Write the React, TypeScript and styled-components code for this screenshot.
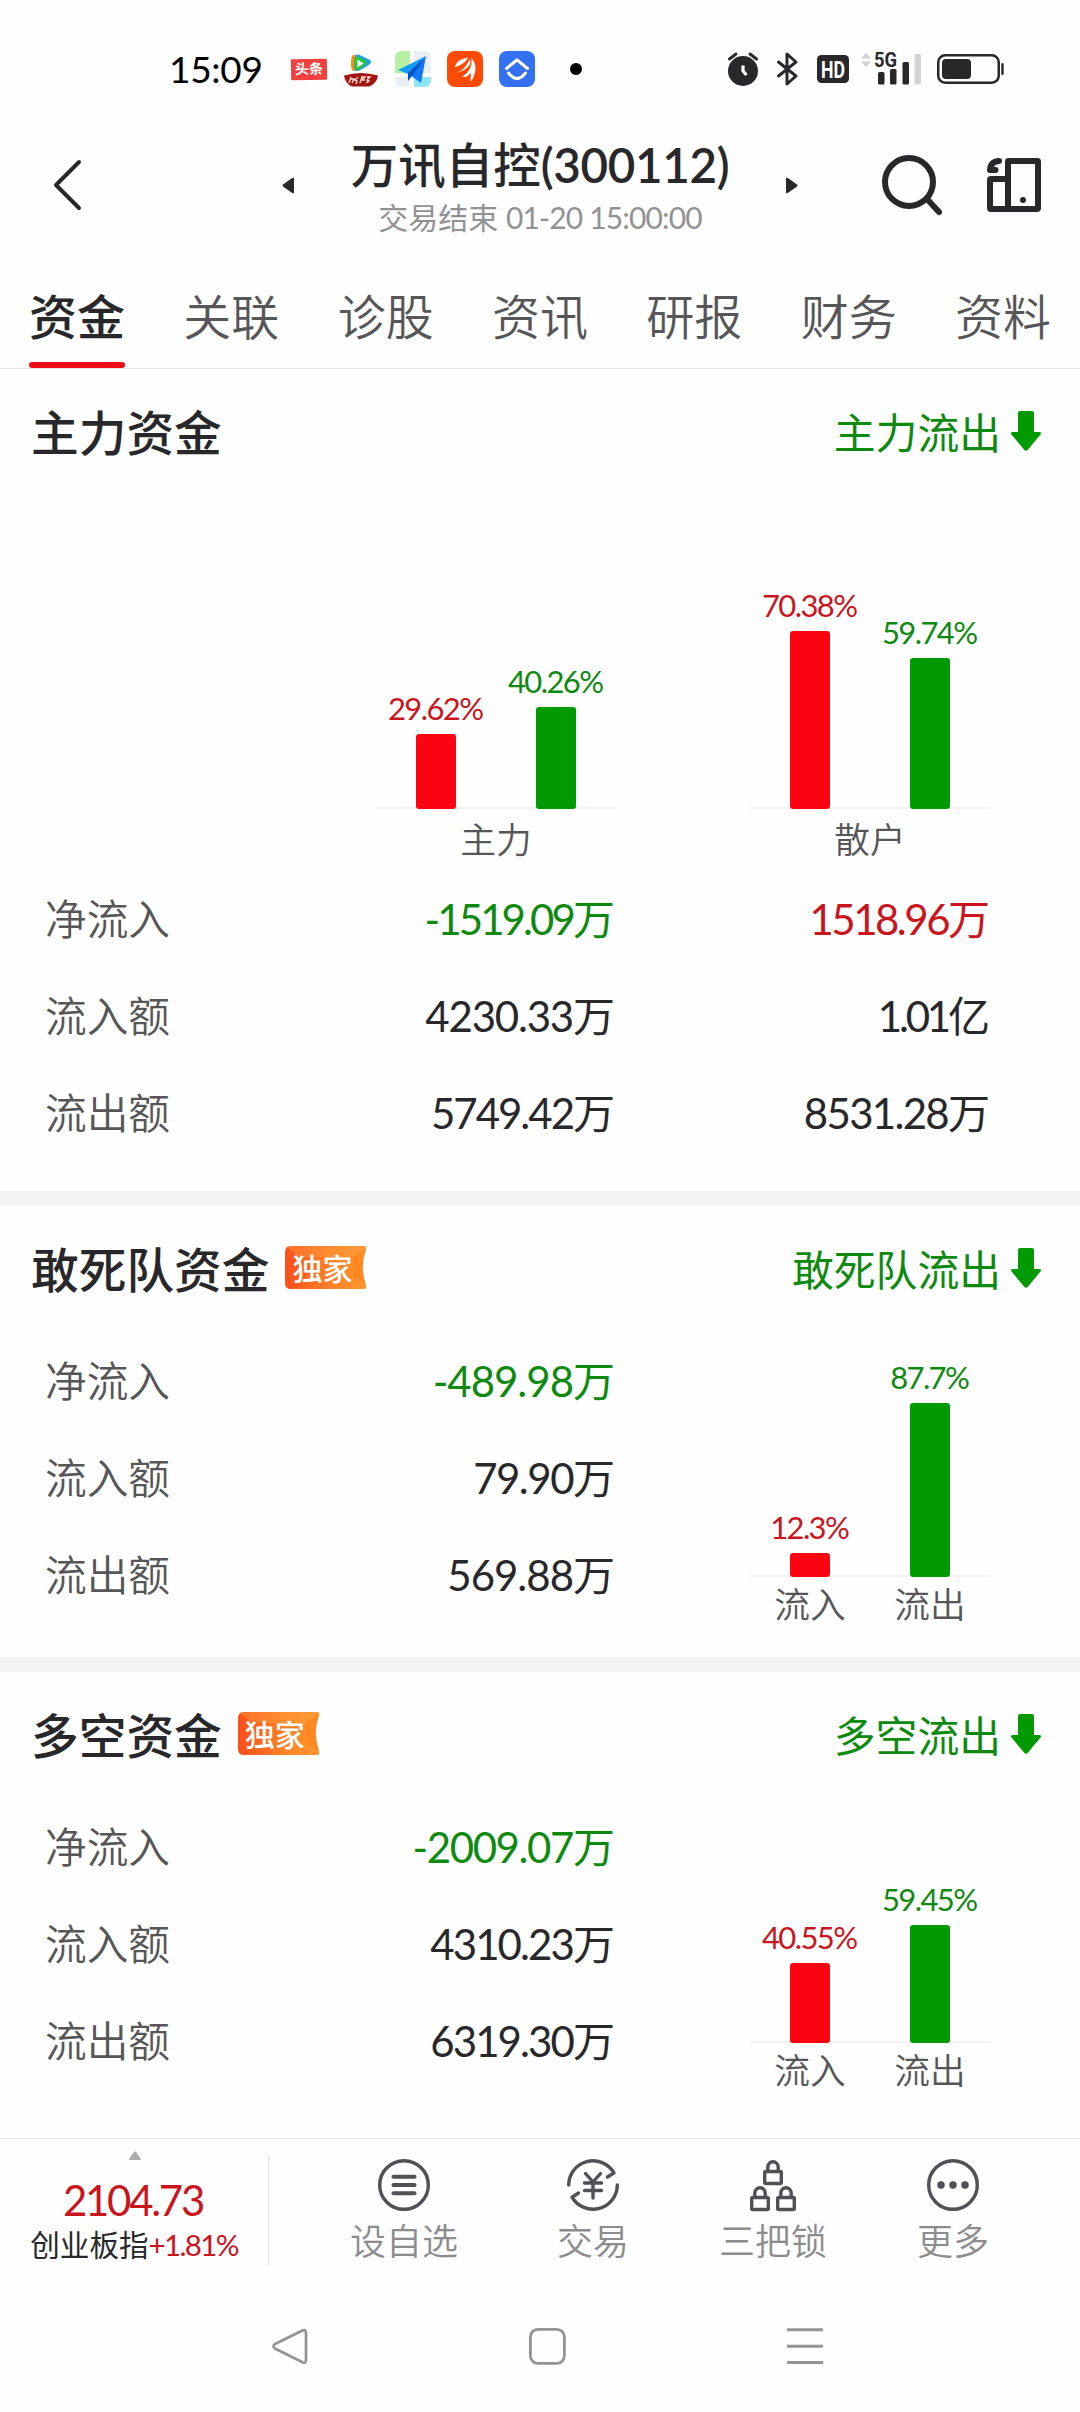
import React from "react";
import styled, { createGlobalStyle } from "styled-components";

const RED = "#c9151e";
const GREEN = "#0f8a10";
const INK = "#28282a";

const GlobalStyle = createGlobalStyle`
  * { box-sizing: border-box; }
  body {
    margin: 0;
    background: #fefefe;
    color: ${INK};
    font-family: "Lato", "Noto Sans CJK SC", sans-serif;
  }
  svg { display: block; flex: none; overflow: visible; }
`;

const Screen = styled.div`
  width: 1080px;
  height: 2412px;
  display: flex;
  flex-direction: column;
  overflow: hidden;
  background: #fefefe;
`;

const StatusBar = styled.div`
  height: 138px;
  padding: 0 76px 0 169px;
  display: flex;
  align-items: center;
  justify-content: space-between;
`;

const StatusGroup = styled.div`
  display: flex;
  align-items: center;
`;

const Clock = styled.span`
  width: 122px;
  font-size: 37px;
  line-height: 40px;
  letter-spacing: -0.3px;
  color: #000;
`;

const AppIcons = styled.div`
  display: flex;
  align-items: center;
  gap: 16px;
`;

const NewsIcon = styled.div`
  width: 36px;
  height: 21px;
  border-radius: 1px;
  background: #f04040;
  color: #fff;
  font-size: 14px;
  font-weight: 700;
  line-height: 20px;
  text-align: center;
  transform: rotate(-1deg);
`;

const Dot = styled.div`
  width: 12px;
  height: 12px;
  margin-left: 35px;
  border-radius: 50%;
  background: #000;
`;

const Header = styled.header`
  height: 132px;
  display: grid;
  grid-template-columns: 282px 516px 1fr;
`;

const Back = styled.div`
  padding: 22px 0 0 53px;
`;

const StockSwitch = styled.div`
  display: flex;
  justify-content: space-between;
`;

const Caret = styled.svg`
  margin-top: 39px;
`;

const StockName = styled.div`
  text-align: center;
`;

const StockTitle = styled.div`
  height: 55px;
  font-size: 47.5px;
  line-height: 53px;
  font-weight: 500;
  white-space: nowrap;
`;

const StockCode = styled.span`
  font-weight: 600;
  letter-spacing: -0.3px;
`;

const StockTime = styled.div`
  margin-top: 7px;
  font-size: 30px;
  line-height: 35px;
  color: #929294;
  white-space: nowrap;
`;

const Timestamp = styled.span`
  letter-spacing: -0.85px;
`;

const HeaderTools = styled.div`
  display: flex;
  gap: 45px;
  padding: 17px 0 0 84px;
`;

const Tabs = styled.nav`
  height: 99px;
  padding: 0 29px;
  display: flex;
  justify-content: space-between;
  border-bottom: 1px solid #e3e3e3;
`;

const Tab = styled.div<{ $active?: boolean }>`
  width: 96px;
  height: 98px;
  padding-top: 16px;
  display: flex;
  flex-direction: column;
  align-items: center;
  justify-content: space-between;
  font-family: "Noto Sans CJK SC", sans-serif;
  font-size: 48px;
  line-height: 56px;
  font-weight: ${(p) => (p.$active ? 500 : 350)};
  color: ${(p) => (p.$active ? INK : "#565658")};

  &::after {
    content: "";
    width: 96px;
    height: 6px;
    border-radius: 3px;
    background: ${(p) => (p.$active ? "#f00c18" : "transparent")};
  }
`;

const Section = styled.section<{ $height: number }>`
  height: ${(p) => p.$height}px;
  flex: none;
`;

const Divider = styled.div`
  height: 15px;
  flex: none;
  background: #f4f4f4;
`;

const SectionHead = styled.div`
  height: 126px;
  padding: 0 39px 0 31px;
  display: flex;
  align-items: center;
`;

const SectionTitle = styled.h2`
  margin: -2px 0 0;
  font-family: "Noto Sans CJK SC", sans-serif;
  font-size: 47.7px;
  line-height: 60px;
  font-weight: 500;
`;

const Badge = styled.div`
  position: relative;
  width: 82px;
  height: 43px;
  margin: -3px 0 0 16px;
`;

const BadgeShape = styled.svg`
  position: absolute;
  inset: 0;
`;

const BadgeText = styled.span`
  position: absolute;
  left: 7px;
  top: 1px;
  font-size: 30px;
  line-height: 42px;
  font-weight: 500;
  color: #fff;
  white-space: nowrap;
`;

const Trend = styled.div`
  margin: -2px 0 0 auto;
  display: flex;
  align-items: center;
  gap: 10px;
  font-family: "Noto Sans CJK SC", sans-serif;
  font-size: 41.8px;
  line-height: 60px;
  color: ${GREEN};
`;

const TrendArrow = styled.svg`
  margin-top: -1px;
`;

const ChartPair = styled.div`
  height: 375px;
  padding: 0 90px 0 376px;
  display: flex;
  justify-content: space-between;
  align-items: flex-end;
`;

const Chart = styled.div`
  width: 240px;
`;

const Plot = styled.div`
  display: flex;
  align-items: flex-end;
  background: linear-gradient(#f2f2f2, #f2f2f2) bottom / 100% 2px no-repeat;
`;

const BarColumn = styled.div<{ $color: string }>`
  width: 120px;
  display: flex;
  flex-direction: column;
  align-items: center;
  color: ${(p) => p.$color};
`;

const BarValue = styled.span`
  font-size: 31px;
  line-height: 36px;
  letter-spacing: -1.6px;
  padding-right: 1.6px;
  margin-bottom: 8px;
  white-space: nowrap;
`;

const Bar = styled.div<{ $fill: string }>`
  width: 40px;
  border-radius: 3px;
  background: ${(p) => p.$fill};
`;

const Captions = styled.div<{ $compact?: boolean }>`
  display: flex;
  height: ${(p) => (p.$compact ? 46 : 61)}px;
  padding-top: 5px;
  font-family: "Noto Sans CJK SC", sans-serif;
  font-size: 35.7px;
  line-height: ${(p) => (p.$compact ? 41 : 48)}px;
  font-weight: 350;
  color: #565658;
`;

const Caption = styled.div`
  flex: 1;
  text-align: center;
`;

const SectionBody = styled.div`
  display: flex;
  justify-content: space-between;
  padding-right: 90px;
`;

const Rows = styled.div`
  width: 615px;
`;

const Row = styled.div<{ $wide?: boolean }>`
  width: ${(p) => (p.$wide ? 990 : 615)}px;
  height: 97px;
  padding-left: 45px;
  display: grid;
  grid-template-columns: 200px 370px 375px;
  align-items: center;
`;

const RowLabel = styled.span`
  margin-top: -3px;
  font-family: "Noto Sans CJK SC", sans-serif;
  font-size: 41.7px;
  line-height: 60px;
  font-weight: 350;
  color: #565658;
`;

const Amount = styled.span<{ $color?: string; $track: number }>`
  text-align: right;
  font-size: 42px;
  line-height: 60px;
  color: ${(p) => p.$color ?? INK};
  letter-spacing: ${(p) => p.$track}px;
  padding-right: ${(p) => -p.$track}px;
  white-space: nowrap;
`;

const SideChart = styled.div`
  height: 291px;
  display: flex;
  flex-direction: column;
  justify-content: flex-end;
`;

const BottomBar = styled.footer`
  height: 130px;
  flex: none;
  display: flex;
  border-top: 1px solid #e3e3e3;
`;

const IndexBox = styled.div`
  width: 269px;
  height: 111px;
  margin-top: 15px;
  border-right: 1px solid #e3e3e3;
  display: flex;
  flex-direction: column;
  align-items: center;
`;

const IndexCaret = styled.svg`
  margin: -3px 0 0 2px;
`;

const IndexValue = styled.div`
  margin-top: 15px;
  font-size: 42px;
  line-height: 50px;
  letter-spacing: -2.3px;
  padding-right: 2px;
  color: ${RED};
`;

const IndexName = styled.div`
  font-size: 29.6px;
  line-height: 36px;
  margin-top: 2px;
  white-space: nowrap;
`;

const Rise = styled.span`
  color: ${RED};
  letter-spacing: -1.7px;
`;

const Actions = styled.div`
  display: grid;
  grid-template-columns: 198px 180px 180px 180px;
  margin-left: 36px;
`;

const Action = styled.div`
  display: flex;
  flex-direction: column;
  align-items: center;
  padding-top: 20px;
`;

const ActionLabel = styled.span`
  margin-top: 4px;
  font-family: "Noto Sans CJK SC", sans-serif;
  font-size: 36px;
  line-height: 48px;
  font-weight: 350;
  color: #8c8c8f;
`;

const SystemNav = styled.div`
  flex: 1;
  display: flex;
  gap: 221px;
  padding: 60px 0 0 271px;
`;

const ICON_STROKE = "#505056";

function VideoAppIcon() {
  return (
    <svg width="36" height="36" viewBox="0 0 36 36">
      <path d="M10 4q-2 1-2 8t2 8l3-1V4z" fill="#ff8a1c" />
      <path d="M13 3.500q3-.8 14 5.500 2 2 0 4Q16 21 12 20 10 12 13 3.500z" fill="#1e9df0" />
      <path d="M12 5.500q3-.5 11 4 1.500 1.500 0 3.500-7 7-11 6-2-6 0-13.500z" fill="#24c838" />
      <path d="M14.500 8.500v8l6-4z" fill="#fff" />
      <path d="M1 24.500q17-5 34 0-1 8-9 11H9q-7-3-8-11z" fill="#a21410" />
      <path d="M8 26l-2 6m2-4h3l-2 4m6-6l-3 3 2 1-1 3m5-7h4l-3 3h3m-3-3l-2 6m7-6h3l-3 3 2 1-3 2" fill="none" stroke="#f6d9c8" strokeWidth="1.400" />
    </svg>
  );
}

function MapAppIcon() {
  return (
    <svg width="36" height="36" viewBox="0 0 36 36">
      <path d="M7 0h8v22H0V7q0-7 7-7z" fill="#b9efa0" />
      <path d="M19 0h10q7 0 7 7v15H19zM0 26h15v10H7q-7 0-7-7z" fill="#e9eff5" />
      <path d="M19 26h17v3q0 7-7 7H19z" fill="#8fe6fb" />
      <path d="M31 5L3 19l10 4z" fill="#169bff" />
      <path d="M31 5L15 24l11 8z" fill="#1177f5" />
      <path d="M31 5L13 22v8l4-5z" fill="#0753c4" />
    </svg>
  );
}

function BrokerAppIcon() {
  return (
    <svg width="36" height="36" viewBox="0 0 36 36">
      <rect width="36" height="36" rx="8" fill="#fe4a05" />
      <path d="M7.500 16.500Q10 8 21 6.500q-2 6-13.500 10zM10 22Q20 17 22.500 8q4 8-12.500 14zM15 26q11-7 9.500-19 8 9 0 23-1 .5-1-1l.5-7-5 4z" fill="#fff" />
    </svg>
  );
}

function HomeAppIcon() {
  return (
    <svg width="36" height="36" viewBox="0 0 36 36">
      <rect width="36" height="36" rx="8" fill="#3370f2" />
      <path d="M7.500 17.500L18 8.800l10.500 8.700M9.500 22q8.500 11 17 0" fill="none" stroke="#fff" strokeWidth="3" strokeLinecap="round" strokeLinejoin="round" />
    </svg>
  );
}

const SystemSet = styled(StatusGroup)`
  & > :nth-child(2) { margin-left: 19px; }
  & > :nth-child(3) { margin-left: 19px; }
  & > :nth-child(4) { margin-left: 12px; }
  & > :nth-child(5) { margin-left: 16px; }
`;

const GlyphText = styled.text`
  font-family: "Roboto", sans-serif;
  font-weight: 700;
`;

function SystemIcons() {
  return (
    <SystemSet>
      <svg width="30" height="34" viewBox="0 0 30 34">
        <circle cx="15" cy="19" r="15" fill={INK} />
        <path d="M1.500 7l6.500-5M22 2l6.500 5" stroke={INK} strokeWidth="3" strokeLinecap="round" />
        <path d="M15 13.500V19l3.500 4" stroke="#fff" strokeWidth="3.200" fill="none" />
      </svg>
      <svg width="21" height="34" viewBox="0 0 21 34">
        <path d="M1.500 10l17.500 14-9 8V2l9 8L1.500 24" fill="none" stroke={INK} strokeWidth="3" strokeLinecap="round" strokeLinejoin="round" />
      </svg>
      <svg width="32" height="28" viewBox="0 0 32 28">
        <rect width="32" height="28" rx="4.500" fill={INK} />
        <GlyphText x="4" y="22.500" fontSize="23" fill="#fff" textLength="24" lengthAdjust="spacingAndGlyphs">HD</GlyphText>
      </svg>
      <svg width="60" height="34" viewBox="0 0 60 34">
        <path d="M0 6.500L5 1l5 5.500zM0 9.500L5 15l5-5.500z" fill="#d3d3d3" />
        <rect x="17" y="20" width="6.500" height="12.500" rx="1.500" fill={INK} />
        <rect x="29" y="17" width="6.500" height="15.500" rx="1.500" fill={INK} />
        <rect x="41.500" y="10" width="6.500" height="22.500" rx="1.500" fill={INK} />
        <rect x="53.500" y="2" width="6.500" height="30.500" rx="1.500" fill="#d3d3d3" />
        <GlyphText x="13" y="15" fontSize="20.500" fill={INK} textLength="23" lengthAdjust="spacingAndGlyphs">5G</GlyphText>
      </svg>
      <svg width="67" height="30" viewBox="0 0 67 30">
        <rect x="1.250" y="1.250" width="60.500" height="27.500" rx="7" fill="none" stroke={INK} strokeWidth="2.500" />
        <rect x="5" y="5" width="29" height="20" rx="4" fill={INK} />
        <rect x="64.300" y="9" width="2.400" height="12" rx="1.200" fill={INK} />
      </svg>
    </SystemSet>
  );
}

function ExclusiveBadge() {
  return (
    <Badge>
      <BadgeShape width="82" height="43" viewBox="0 0 82 43">
        <defs>
          <linearGradient id="badgeFill" x1="0" x2="1" y1="0" y2="0">
            <stop offset="0" stopColor="#fb4f1c" />
            <stop offset="0.6" stopColor="#fd8428" />
            <stop offset="1" stopColor="#fe962e" />
          </linearGradient>
        </defs>
        <path d="M6 0h73q3 0 2 3-6.500 18 0 36 1 4-2 4H6q-6 0-6-6V6q0-6 6-6z" fill="url(#badgeFill)" />
        <path d="M2 1L14 11h54L81 1q-1-1-3-1H6Q3 0 2 1z" fill="#ffa040" opacity=".4" />
        <path d="M81 3q-6.500 18 0 36L68 30V11z" fill="#ff7d18" opacity=".5" />
      </BadgeShape>
      <BadgeText>独家</BadgeText>
    </Badge>
  );
}

function DownTrend({ text }: { text: string }) {
  return (
    <Trend>
      {text}
      <TrendArrow width="30" height="40" viewBox="0 0 30 40">
        <path d="M9 0h12q2 0 2 2v19h5q3 0 1.500 2.500L17 38.500q-2 2.500-4 0L.5 23.500Q-1 21 2 21h5V2q0-2 2-2z" fill="#029a02" />
      </TrendArrow>
    </Trend>
  );
}

type BarDatum = { pct: string; up: boolean };

function Bars({ data, scale }: { data: BarDatum[]; scale: number }) {
  return (
    <Plot>
      {data.map((d) => (
        <BarColumn key={d.pct} $color={d.up ? RED : GREEN}>
          <BarValue>{d.pct}%</BarValue>
          <Bar $fill={d.up ? "#fa0411" : "#029a02"} style={{ height: Math.round(parseFloat(d.pct) * scale) }} />
        </BarColumn>
      ))}
    </Plot>
  );
}

type AmountDatum = { text: string; color?: string; track?: number };

function AmountRow({ label, values }: { label: string; values: AmountDatum[] }) {
  return (
    <Row $wide={values.length > 1}>
      <RowLabel>{label}</RowLabel>
      {values.map((v) => (
        <Amount key={v.text} $color={v.color} $track={v.track ?? -1.2}>
          {v.text}
        </Amount>
      ))}
    </Row>
  );
}

type FlowProps = { title: string; trend: string; height: number; rows: [string, AmountDatum][]; bars: BarDatum[] };

function FlowSection({ title, trend, height, rows, bars }: FlowProps) {
  return (
    <Section $height={height}>
      <SectionHead>
        <SectionTitle>{title}</SectionTitle>
        <ExclusiveBadge />
        <DownTrend text={trend} />
      </SectionHead>
      <SectionBody>
        <Rows>
          {rows.map(([label, value]) => (
            <AmountRow key={label} label={label} values={[value]} />
          ))}
        </Rows>
        <SideChart>
          <Chart>
            <Bars data={bars} scale={1.985} />
            <Captions $compact>
              <Caption>流入</Caption>
              <Caption>流出</Caption>
            </Captions>
          </Chart>
        </SideChart>
      </SectionBody>
    </Section>
  );
}

const lineProps = {
  fill: "none",
  stroke: ICON_STROKE,
  strokeWidth: 3.4,
  strokeLinecap: "round" as const,
  strokeLinejoin: "round" as const,
};

function Lock({ x, y }: { x: number; y: number }) {
  return (
    <g transform={`translate(${x} ${y})`}>
      <rect x="1.700" y="11.500" width="16.600" height="12" rx="1" />
      <path d="M4.800 11V7.500a5.200 5.800 0 0 1 10.400 0V11" />
    </g>
  );
}

export default function App() {
  return (
    <Screen>
      <GlobalStyle />
      <StatusBar>
        <StatusGroup>
          <Clock>15:09</Clock>
          <AppIcons>
            <NewsIcon>头条</NewsIcon>
            <VideoAppIcon />
            <MapAppIcon />
            <BrokerAppIcon />
            <HomeAppIcon />
          </AppIcons>
          <Dot />
        </StatusGroup>
        <SystemIcons />
      </StatusBar>

      <Header>
        <Back>
          <svg width="28" height="50" viewBox="0 0 28 50">
            <path d="M26 2L3 25l23 23" fill="none" stroke={INK} strokeWidth="4" strokeLinecap="round" strokeLinejoin="round" />
          </svg>
        </Back>
        <StockSwitch>
          <Caret width="12" height="17" viewBox="0 0 12 17">
            <path d="M10.500.8L1 7.500q-1 1 0 2l9.500 6.700q1.500.5 1.500-1V1.800q0-1.500-1.500-1z" fill={INK} />
          </Caret>
          <StockName>
            <StockTitle>万讯自控<StockCode>(300112)</StockCode></StockTitle>
            <StockTime>交易结束 <Timestamp>01-20 15:00:00</Timestamp></StockTime>
          </StockName>
          <Caret width="12" height="17" viewBox="0 0 12 17">
            <path d="M1.500.8L11 7.500q1 1 0 2l-9.500 6.700Q0 16.700 0 15.200V1.800q0-1.500 1.500-1z" fill={INK} />
          </Caret>
        </StockSwitch>
        <HeaderTools>
          <svg width="60" height="60" viewBox="0 0 60 60">
            <circle cx="27" cy="27" r="24" fill="none" stroke={INK} strokeWidth="6" />
            <path d="M45.500 44.500L57 57" stroke={INK} strokeWidth="6" strokeLinecap="round" />
          </svg>
          <svg width="54" height="60" viewBox="0 0 54 60">
            <path d="M21 6.500q0-.5.500-.5h29q.5 0 .5.500V53q0 1-1 1H4q-1 0-1-1V25q0-1 1-1h17zM21 6v48" fill="none" stroke={INK} strokeWidth="6" strokeLinejoin="round" />
            <circle cx="36" cy="45" r="3" fill={INK} />
            <path d="M12 6Q3.500 6.500 3 15h5.500" fill="none" stroke={INK} strokeWidth="6" strokeLinecap="round" strokeLinejoin="round" />
          </svg>
        </HeaderTools>
      </Header>

      <Tabs>
        {["资金", "关联", "诊股", "资讯", "研报", "财务", "资料"].map((t, i) => (
          <Tab key={t} $active={i === 0}>{t}</Tab>
        ))}
      </Tabs>

      <Section $height={822}>
        <SectionHead>
          <SectionTitle>主力资金</SectionTitle>
          <DownTrend text="主力流出" />
        </SectionHead>
        <ChartPair>
          <Chart>
            <Bars data={[{ pct: "29.62", up: true }, { pct: "40.26", up: false }]} scale={2.53} />
            <Captions><Caption>主力</Caption></Captions>
          </Chart>
          <Chart>
            <Bars data={[{ pct: "70.38", up: true }, { pct: "59.74", up: false }]} scale={2.53} />
            <Captions><Caption>散户</Caption></Captions>
          </Chart>
        </ChartPair>
        <AmountRow
          label="净流入"
          values={[{ text: "-1519.09万", color: GREEN, track: -2.9 }, { text: "1518.96万", color: RED, track: -2.5 }]}
        />
        <AmountRow label="流入额" values={[{ text: "4230.33万" }, { text: "1.01亿", track: -3.2 }]} />
        <AmountRow label="流出额" values={[{ text: "5749.42万", track: -2 }, { text: "8531.28万", track: -1.7 }]} />
      </Section>
      <Divider />

      <FlowSection
        title="敢死队资金"
        trend="敢死队流出"
        height={451}
        rows={[
          ["净流入", { text: "-489.98万", color: GREEN, track: -1 }],
          ["流入额", { text: "79.90万", track: -1.5 }],
          ["流出额", { text: "569.88万", track: -1 }],
        ]}
        bars={[{ pct: "12.3", up: true }, { pct: "87.7", up: false }]}
      />
      <Divider />

      <FlowSection
        title="多空资金"
        trend="多空流出"
        height={466}
        rows={[
          ["净流入", { text: "-2009.07万", color: GREEN, track: -1.4 }],
          ["流入额", { text: "4310.23万", track: -1.9 }],
          ["流出额", { text: "6319.30万", track: -1.9 }],
        ]}
        bars={[{ pct: "40.55", up: true }, { pct: "59.45", up: false }]}
      />

      <BottomBar>
        <IndexBox>
          <IndexCaret width="12" height="9" viewBox="0 0 12 9">
            <path d="M5 1q1-1.500 2 0l5 7q0 1-1 1H1Q0 9 0 8z" fill="#ababad" />
          </IndexCaret>
          <IndexValue>2104.73</IndexValue>
          <IndexName>创业板指<Rise>+1.81%</Rise></IndexName>
        </IndexBox>
        <Actions>
          <Action>
            <svg width="52" height="52" viewBox="0 0 52 52" {...lineProps}>
              <circle cx="26" cy="26" r="24.300" />
              <path d="M15.500 17.700h21M15.500 26h21M15.500 34.300h21" strokeWidth="4" />
            </svg>
            <ActionLabel>设自选</ActionLabel>
          </Action>
          <Action>
            <svg width="52" height="52" viewBox="0 0 52 52" {...lineProps}>
              <path d="M1.700 26A24.300 24.300 0 0 1 47 13.800L40.500 18M50.300 26A24.300 24.300 0 0 1 5 38.200L11.500 34M18.500 14.500l7.500 8.500 7.500-8.500M26 23v16M17.500 24h17M17.500 31.500h17" />
            </svg>
            <ActionLabel>交易</ActionLabel>
          </Action>
          <Action>
            <svg width="46" height="52" viewBox="0 0 46 52" {...lineProps}>
              <Lock x={13} y={1} />
              <Lock x={0} y={27} />
              <Lock x={26} y={27} />
            </svg>
            <ActionLabel>三把锁</ActionLabel>
          </Action>
          <Action>
            <svg width="52" height="52" viewBox="0 0 52 52" {...lineProps}>
              <circle cx="26" cy="26" r="24.300" />
              <path d="M14 26h.01M26 26h.01M38 26h.01" strokeWidth="7.500" />
            </svg>
            <ActionLabel>更多</ActionLabel>
          </Action>
        </Actions>
      </BottomBar>

      <SystemNav>
        <svg width="37" height="37" viewBox="0 0 37 37">
          <path d="M32 2.300L4 16q-3 2 0 4.500L32 34.500q3 1 3-2.500V5q0-3.500-3-2.700z" fill="none" stroke="#949494" strokeWidth="2.700" strokeLinejoin="round" />
        </svg>
        <svg width="37" height="37" viewBox="0 0 37 37">
          <rect x="1.400" y="1.400" width="34" height="34" rx="7.500" fill="none" stroke="#949494" strokeWidth="2.800" />
        </svg>
        <svg width="37" height="37" viewBox="0 0 37 37">
          <path d="M0 1.800h36M0 18.200h36M0 34.600h36" stroke="#949494" strokeWidth="3" />
        </svg>
      </SystemNav>
    </Screen>
  );
}
